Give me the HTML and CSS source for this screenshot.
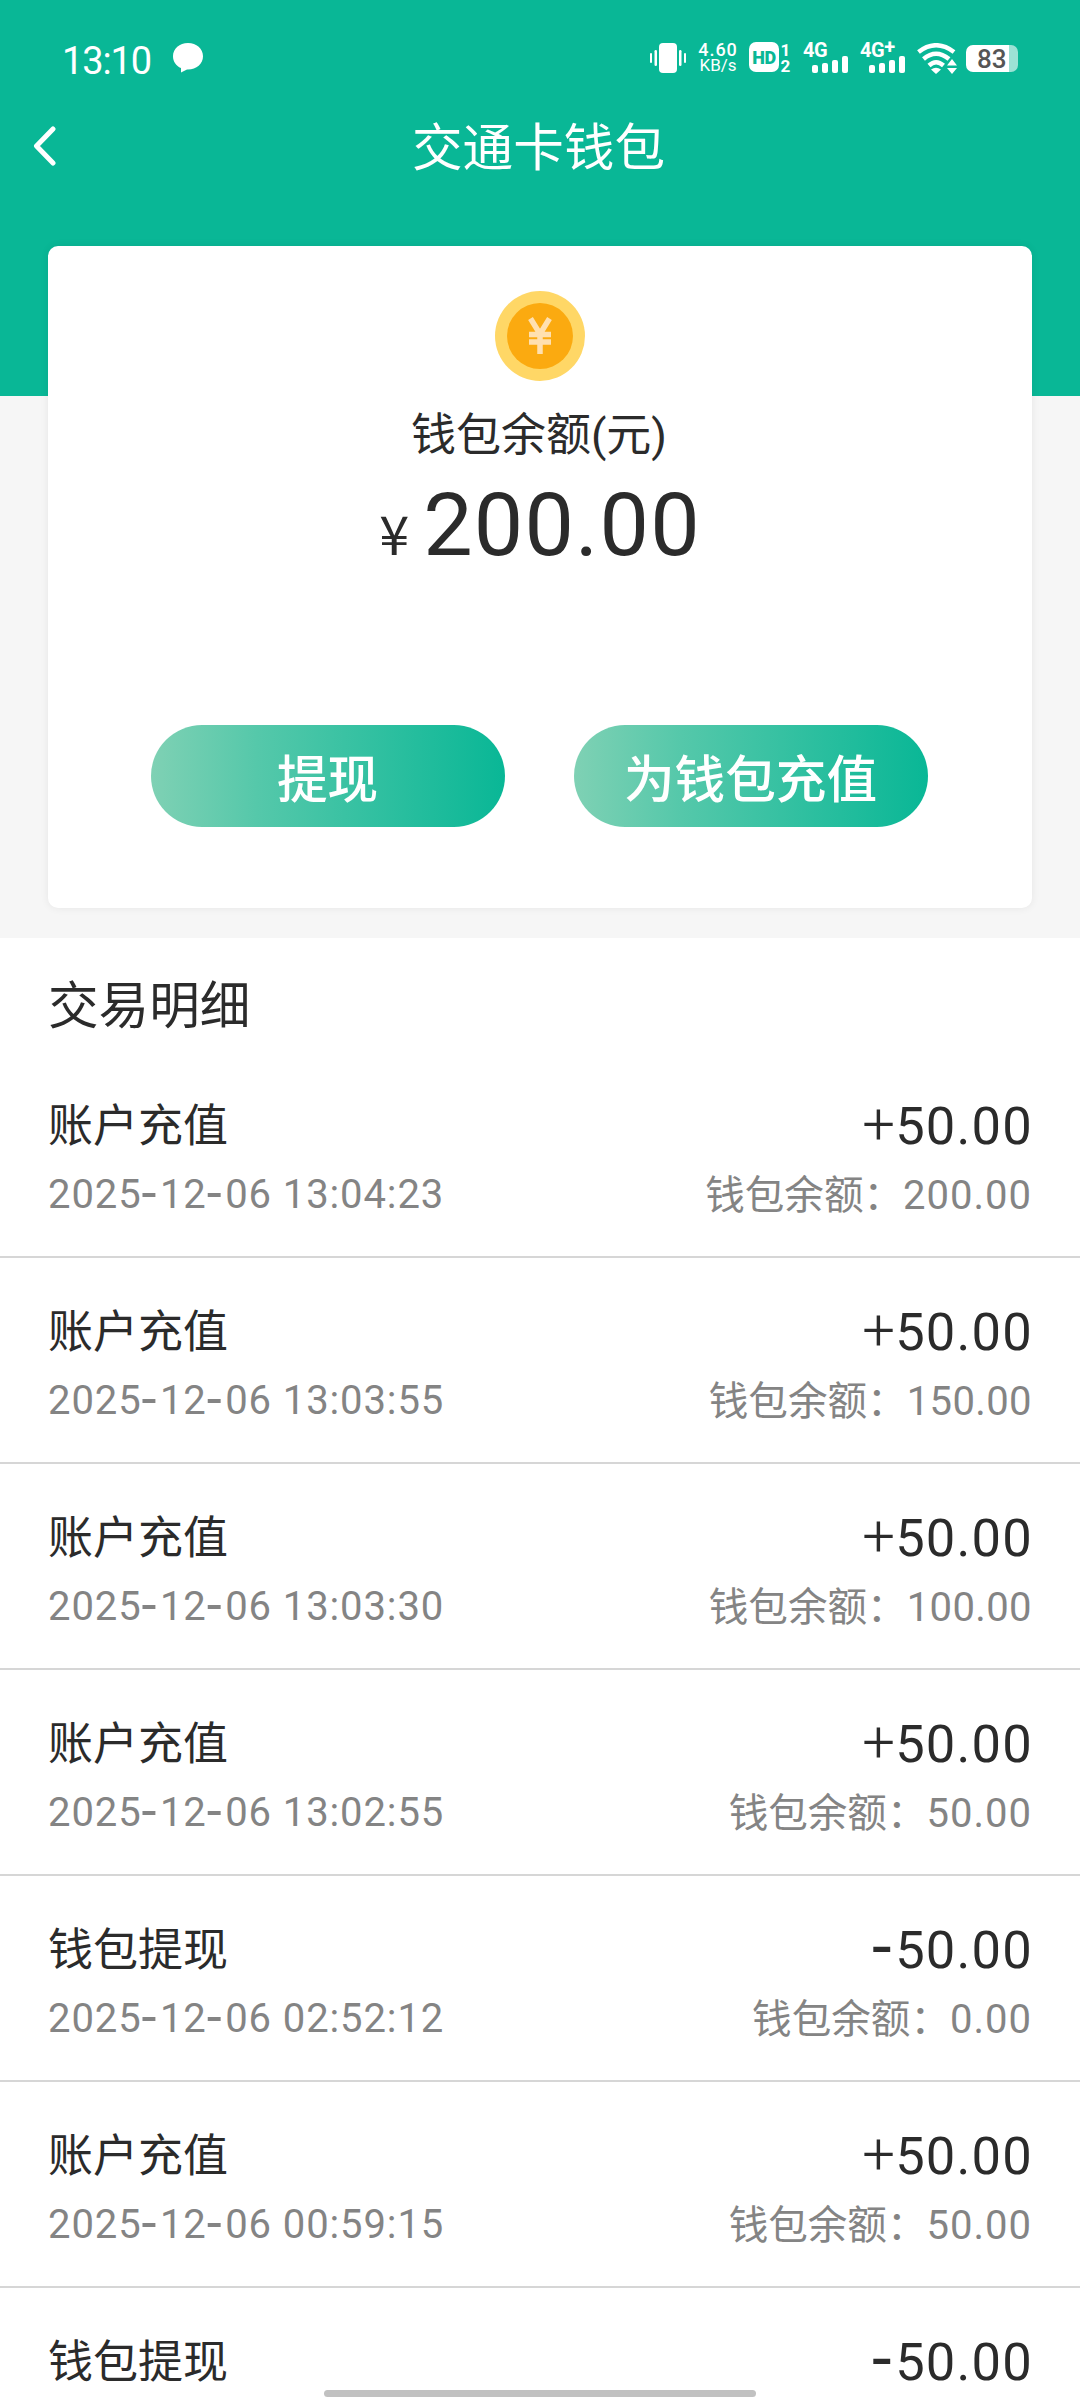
FILE: index.html
```
<!DOCTYPE html>
<html lang="zh-CN">
<head>
<meta charset="utf-8">
<title>交通卡钱包</title>
<link rel="stylesheet" href="styles.css">
</head>
<body>
<div class="screen">
  <header class="header">
    <div class="status">
      <div class="status-left">
        <span class="time">13:10</span>
        <svg class="chat" width="30" height="30" viewBox="0 0 30 30"><path d="M15 0C23.500 0 30 5.600 30 13.200S23.500 26.500 15 26.500L14 26.400L8 29.500V25C3 22.800 0 18.500 0 13.200C0 5.600 6.500 0 15 0Z" fill="#fff"/></svg>
      </div>
      <div class="status-right">
        <svg class="vibrate" width="36" height="30" viewBox="0 0 36 30" fill="#fff"><rect x="9" y="0" width="18" height="30" rx="4"/><rect x="0" y="10" width="2" height="10" rx="1"/><rect x="4.500" y="7" width="2.500" height="16" rx="1.200"/><rect x="29" y="7" width="2.500" height="16" rx="1.200"/><rect x="34" y="10" width="2" height="10" rx="1"/></svg>
        <div class="speed"><span class="speed-value">4.60</span><span class="speed-unit">KB/s</span></div>
        <div class="hd"><span class="hd-badge">HD</span><div class="hd-nums"><span>1</span><span>2</span></div></div>
        <div class="signal"><span class="net">4G</span><svg class="bars" width="36" height="17" viewBox="0 0 36 17" fill="#fff"><rect x="0" y="9" width="6" height="8" rx="2"/><rect x="10" y="7" width="6" height="10" rx="2"/><rect x="20" y="4" width="6" height="13" rx="2"/><rect x="30" y="0" width="6" height="17" rx="2"/></svg></div>
        <div class="signal second"><span class="net">4G<span class="plus">+</span></span><svg class="bars" width="36" height="17" viewBox="0 0 36 17" fill="#fff"><rect x="0" y="9" width="6" height="8" rx="2"/><rect x="10" y="7" width="6" height="10" rx="2"/><rect x="20" y="4" width="6" height="13" rx="2"/><rect x="30" y="0" width="6" height="17" rx="2"/></svg></div>
        <svg class="wifi" width="40" height="31" viewBox="0 0 40 31"><g fill="none" stroke="#fff" stroke-width="4.500"><path d="M1.500 9Q19 -4.500 37 9"/><path d="M6.500 16Q19 5.500 32 16"/><path d="M12 22.500Q19 16 26.500 22.500"/></g><path d="M14 26.500Q19 23 24 26.500L19 31Z" fill="#fff"/><path d="M30 22.500L35 16L40 22.500ZM30 25H40L35 31Z" fill="#fff"/></svg>
        <div class="battery"><span class="battery-level">83</span></div>
      </div>
    </div>
    <div class="titlebar">
      <svg class="back" width="24" height="40" viewBox="0 0 24 40"><path d="M20 3L3.500 20L20 37" fill="none" stroke="#fff" stroke-width="5" stroke-linecap="round" stroke-linejoin="round"/></svg>
      <h1 class="title">交通卡钱包</h1>
    </div>
  </header>

  <section class="card">
    <svg class="coin" width="90" height="90" viewBox="0 0 90 90"><circle cx="45" cy="45" r="45" fill="#ffd766"/><circle cx="45" cy="45" r="33" fill="#fbaa10"/><path d="M35.500 27.500L45 43L54.500 27.500M34 43.500H56M34 51H56M45 43V63" fill="none" stroke="#ffe0b0" stroke-width="5.500"/></svg>
    <div class="balance-label">钱包余额(元)</div>
    <div class="balance"><span class="yen">¥</span><span class="balance-value">200.00</span></div>
    <div class="actions">
      <button class="btn">提现</button>
      <button class="btn">为钱包充值</button>
    </div>
  </section>

  <main class="details">
    <h2 class="details-title">交易明细</h2>
    <ul class="list">
      <li class="row"><div class="line"><span class="kind">账户充值</span><span class="amount"><i class="sign">+</i>50.00</span></div><div class="line sub"><span class="date">2025<i>-</i>12<i>-</i>06 13:04:23</span><span class="left">钱包余额：<b>200.00</b></span></div></li>
      <li class="row"><div class="line"><span class="kind">账户充值</span><span class="amount"><i class="sign">+</i>50.00</span></div><div class="line sub"><span class="date">2025<i>-</i>12<i>-</i>06 13:03:55</span><span class="left one">钱包余额：<b>150.00</b></span></div></li>
      <li class="row"><div class="line"><span class="kind">账户充值</span><span class="amount"><i class="sign">+</i>50.00</span></div><div class="line sub"><span class="date">2025<i>-</i>12<i>-</i>06 13:03:30</span><span class="left one">钱包余额：<b>100.00</b></span></div></li>
      <li class="row"><div class="line"><span class="kind">账户充值</span><span class="amount"><i class="sign">+</i>50.00</span></div><div class="line sub"><span class="date">2025<i>-</i>12<i>-</i>06 13:02:55</span><span class="left">钱包余额：<b>50.00</b></span></div></li>
      <li class="row"><div class="line"><span class="kind">钱包提现</span><span class="amount"><i>-</i>50.00</span></div><div class="line sub"><span class="date">2025<i>-</i>12<i>-</i>06 02:52:12</span><span class="left">钱包余额：<b>0.00</b></span></div></li>
      <li class="row"><div class="line"><span class="kind">账户充值</span><span class="amount"><i class="sign">+</i>50.00</span></div><div class="line sub"><span class="date">2025<i>-</i>12<i>-</i>06 00:59:15</span><span class="left">钱包余额：<b>50.00</b></span></div></li>
      <li class="row"><div class="line"><span class="kind">钱包提现</span><span class="amount"><i>-</i>50.00</span></div></li>
    </ul>
  </main>
  <div class="home-indicator"></div>
</div>
</body>
</html>
```
FILE: styles.css
```
* { box-sizing: border-box; margin: 0; padding: 0; }
body { font-family: Roboto, "Noto Sans CJK SC", sans-serif; color: #2b2b2b; background: #f6f6f6; }
i, b { font-style: normal; font-weight: 400; }
.screen { position: relative; width: 1080px; height: 2400px; overflow: hidden; display: flex; flex-direction: column; }

.header { height: 396px; flex: none; background: #09b796; color: #fff; }
.status { height: 116px; padding: 0 62px 0 62px; display: flex; align-items: center; justify-content: space-between; }
.status-left { display: flex; align-items: center; gap: 22px; }
.time { font-size: 38px; letter-spacing: -1.1px; line-height: 40px; padding-top: 5px; }
.chat { display: block; }
.status-right { display: flex; align-items: center; }
.vibrate { margin-right: 11px; }
.speed { width: 42px; display: flex; flex-direction: column; align-items: center; font-weight: 500; }
.speed-value { font-size: 18px; line-height: 15px; letter-spacing: 0.9px; }
.speed-unit { font-size: 17px; line-height: 17px; font-weight: 400; }
.hd { display: flex; margin-left: 10px; }
.hd-badge { width: 30px; height: 30px; border-radius: 7px; background: #fff; color: #09b796; font-weight: 900; font-size: 18px; line-height: 31px; text-align: center; letter-spacing: -0.5px; }
.hd-nums { width: 13px; display: flex; flex-direction: column; align-items: center; font-size: 17px; font-weight: 700; line-height: 16px; }
.signal { width: 45px; height: 30px; margin-left: 11px; display: flex; flex-direction: column; }
.signal.second { margin-left: 12px; }
.net { font-size: 20px; font-weight: 700; line-height: 15px; height: 13px; letter-spacing: -0.4px; white-space: nowrap; }
.plus { position: relative; top: -3px; }
.bars { align-self: flex-end; }
.wifi { margin-left: 12px; }
.battery { width: 52px; height: 27px; margin-left: 9px; border-radius: 7px; background: linear-gradient(90deg, #fff 43px, #9ce2d5 43px); color: #555; font-size: 26px; font-weight: 500; line-height: 29px; padding-left: 11px; }

.titlebar { height: 62px; display: flex; align-items: center; justify-content: center; position: relative; }
.back { position: absolute; left: 33px; top: 10px; }
.title { font-size: 50.6px; line-height: 62px; font-weight: 400; padding: 4px 3px 0 0; }

.card { position: relative; width: 984px; height: 662px; margin: -150px auto 0; flex: none; background: #fff; border-radius: 10px; box-shadow: 0 0 9px rgba(0,0,0,.07); padding-top: 45px; display: flex; flex-direction: column; align-items: center; }
.coin { display: block; }
.balance-label { margin-top: 22px; padding-right: 2px; font-size: 45px; line-height: 66px; }
.balance { display: flex; align-items: baseline; line-height: 106px; margin-top: 3px; }
.yen { font-family: "Noto Sans CJK SC", sans-serif; font-size: 54px; line-height: 1; width: 44px; }
.balance-value { font-size: 88px; letter-spacing: 1.2px; }
.actions { display: flex; gap: 69px; margin-top: 147px; padding-right: 2px; }
.btn { width: 354px; height: 102px; border: 0; border-radius: 51px; background: linear-gradient(90deg, #7fd1b4, #55c8aa 30%, #09b796); color: #fff; font: 500 50.6px/106px Roboto, "Noto Sans CJK SC", sans-serif; padding-top: 3px; }

.details { margin-top: 30px; flex: 1; background: #fff; }
.details-title { font-size: 50.6px; font-weight: 400; line-height: 74px; padding: 32px 48px 0; }
.list { list-style: none; padding-top: 8px; }
.row { height: 206px; padding: 41px 49px 0 48px; border-bottom: 2px solid #d6d6d6; }
.line { display: flex; justify-content: space-between; align-items: center; height: 66px; white-space: nowrap; }
.kind { font-size: 45px; margin-top: -7px; }
.amount { font-size: 52.5px; letter-spacing: 1.2px; margin-right: -2px; }
.amount .sign { font-size: 58px; font-weight: 300; letter-spacing: 0; line-height: 0; }
.sub { color: #848484; height: 70px; }
.date { font-size: 40px; letter-spacing: 0.9px; }
.date i { position: relative; top: 3px; }
.amount i:not(.sign) { position: relative; top: 3px; }
.date i, .amount i:not(.sign) { font-size: 1.35em; line-height: 0; letter-spacing: 3.5px; }
.left { font-size: 39.6px; margin-top: -6px; }
.left b { font-size: 40px; letter-spacing: 1px; margin-right: -1px; }
.left.one b { letter-spacing: 0.4px; }
.home-indicator { position: absolute; left: 324px; bottom: 3px; width: 432px; height: 7px; border-radius: 4px; background: #c1c1c1; }
```
